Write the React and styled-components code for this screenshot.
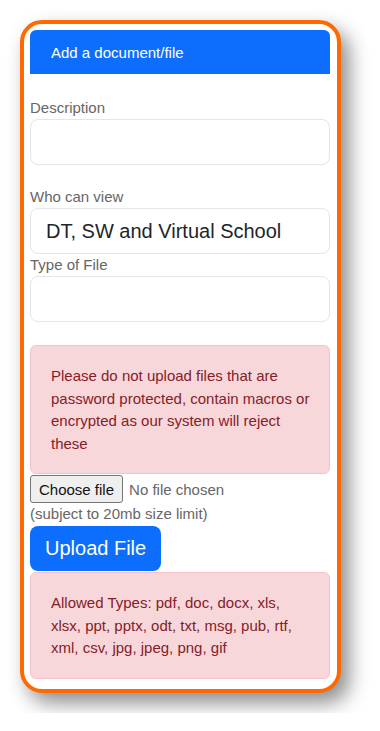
import React from "react";
import styled, { createGlobalStyle } from "styled-components";

const GlobalStyle = createGlobalStyle`
  body {
    margin: 0;
    background: #ffffff;
    font-family: "Liberation Sans", Arial, sans-serif;
  }
`;

const Page = styled.div`
  padding: 20px;
`;

const Frame = styled.div`
  width: 321px;
  box-sizing: border-box;
  border: 4px solid #ff6a00;
  border-radius: 22px;
  background: #ffffff;
  padding: 6px 7px 10px 6px;
  box-shadow: 8px 10px 20px rgba(0, 0, 0, 0.45);
  display: flex;
  flex-direction: column;
`;

const Header = styled.div`
  height: 44px;
  display: flex;
  align-items: center;
  padding-left: 21px;
  background: #0d6efd;
  border-radius: 6px 6px 0 0;
  color: #ffffff;
  font-size: 15px;
`;

const Field = styled.div`
  display: flex;
  flex-direction: column;
  margin-top: ${(props) => props.$top || 0}px;
`;

const Label = styled.label`
  font-size: 15px;
  line-height: 22px;
  color: #666666;
`;

const TextInput = styled.input`
  box-sizing: border-box;
  width: 100%;
  height: 46px;
  border: 1px solid #e3e5e8;
  border-radius: 8px;
  padding: 0 15px;
  font-family: "Liberation Sans", Arial, sans-serif;
  font-size: 20px;
  color: #212529;
  background: #ffffff;
  outline: none;
`;

const Alert = styled.div`
  margin-top: ${(props) => props.$top || 0}px;
  border: 1px solid #f5c2c7;
  border-radius: 6px;
  background: #f8d7da;
  color: #842029;
  font-size: 15px;
  line-height: 22.5px;
  padding: 19px 17px 18px 20px;
`;

const FileRow = styled.label`
  display: flex;
  align-items: center;
  gap: 6px;
  margin-top: 1px;
  font-size: 15px;
  color: #666666;

  input {
    display: none;
  }
`;

const FileButton = styled.span`
  box-sizing: border-box;
  height: 28px;
  display: flex;
  align-items: center;
  padding: 0 8px;
  color: #111111;
  background: #efefef;
  border: 1px solid #767676;
  border-radius: 3px;
`;

const Note = styled.div`
  font-size: 15px;
  line-height: 22px;
  color: #666666;
`;

const UploadButton = styled.button`
  align-self: flex-start;
  height: 45px;
  margin-top: 1px;
  padding: 0 15px;
  border: none;
  border-radius: 8px;
  background: #0d6efd;
  color: #ffffff;
  font-family: "Liberation Sans", Arial, sans-serif;
  font-size: 20px;
`;

export default function App() {
  return (
    <>
      <GlobalStyle />
      <Page>
        <Frame>
          <Header>Add a document/file</Header>
          <Field $top={23}>
            <Label>Description</Label>
            <TextInput />
          </Field>
          <Field $top={21}>
            <Label>Who can view</Label>
            <TextInput readOnly defaultValue="DT, SW and Virtual School" />
          </Field>
          <Field>
            <Label>Type of File</Label>
            <TextInput />
          </Field>
          <Alert $top={23}>
            Please do not upload files that are password protected, contain
            macros or encrypted as our system will reject these
          </Alert>
          <FileRow>
            <input type="file" />
            <FileButton>Choose file</FileButton>
            <span>No file chosen</span>
          </FileRow>
          <Note>(subject to 20mb size limit)</Note>
          <UploadButton>Upload File</UploadButton>
          <Alert $top={1}>
            Allowed Types: pdf, doc, docx, xls, xlsx, ppt, pptx, odt, txt, msg,
            pub, rtf, xml, csv, jpg, jpeg, png, gif
          </Alert>
        </Frame>
      </Page>
    </>
  );
}
